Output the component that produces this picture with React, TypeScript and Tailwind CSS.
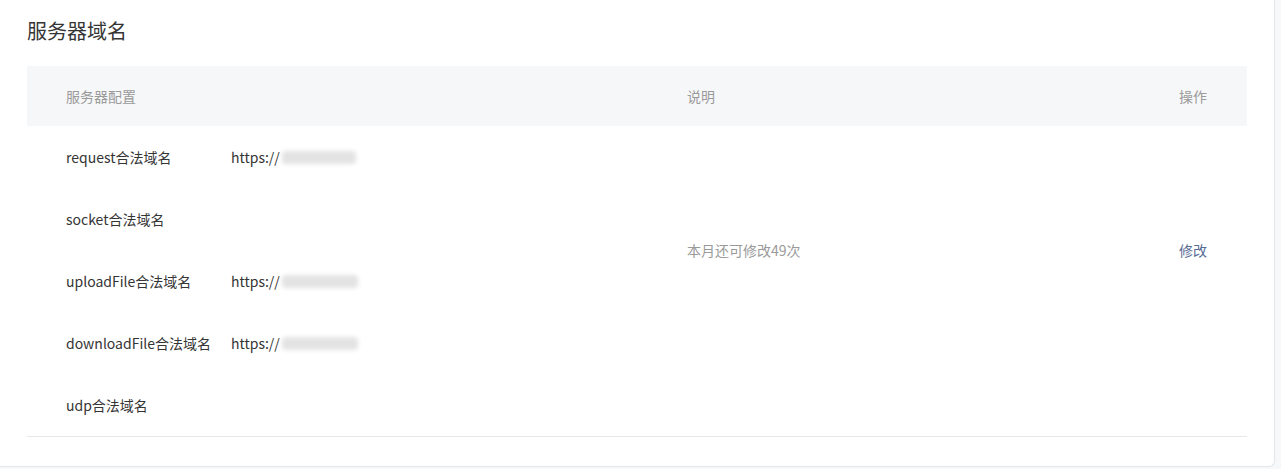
import React from "react";

const domains: { label: string; url?: string; mask?: number }[] = [
  { label: "request合法域名", url: "https://", mask: 74 },
  { label: "socket合法域名" },
  { label: "uploadFile合法域名", url: "https://", mask: 76 },
  { label: "downloadFile合法域名", url: "https://", mask: 76 },
  { label: "udp合法域名" },
];

// blurred placeholder for the hidden domain part
const Masked = ({ width }: { width: number }) => (
  <span
    className="ml-0.5 inline-block h-[13px] rounded-sm bg-[#e3e3e3] blur-[2px]"
    style={{ width }}
  />
);

export default function App() {
  return (
    <div
      className="h-[469px] w-full bg-[#f6f8f9]"
      style={{ fontFamily: '"Noto Sans CJK SC", "Noto Sans", sans-serif' }}
    >
      <div className="h-[467px] w-[1275px] rounded-br-md border-r border-b border-[#e4e6e9] bg-white px-[27px] pt-[15px]">
        {/* TITLE */}
        <h2 className="text-[20px] leading-[32px] font-normal text-[#353535]">
          服务器域名
        </h2>

        {/* TABLE */}
        <div className="mt-[19px] w-[1220px]">
          <div className="flex h-[60px] items-center bg-[#f6f7f9] text-[14px] text-[#9a9a9a]">
            <div className="w-[660px] pl-[39px]">服务器配置</div>
            <div className="flex-1">说明</div>
            <div className="pr-10">操作</div>
          </div>

          <div className="flex border-b border-[#e7e7eb] text-[14px]">
            <div className="w-[660px] pl-[39px]">
              {domains.map((d) => (
                <div key={d.label} className="flex h-[62px] items-center text-[#353535]">
                  <span className="w-[165px]">{d.label}</span>
                  {d.url && (
                    <span className="flex items-center">
                      {d.url}
                      <Masked width={d.mask ?? 74} />
                    </span>
                  )}
                </div>
              ))}
            </div>
            <div className="flex flex-1 items-center pb-[62px] text-[#9a9a9a]">本月还可修改49次</div>
            <div className="flex items-center pr-10 pb-[62px]">
              <a className="text-[#576b95]" href="#">
                修改
              </a>
            </div>
          </div>
        </div>
      </div>
    </div>
  );
}
